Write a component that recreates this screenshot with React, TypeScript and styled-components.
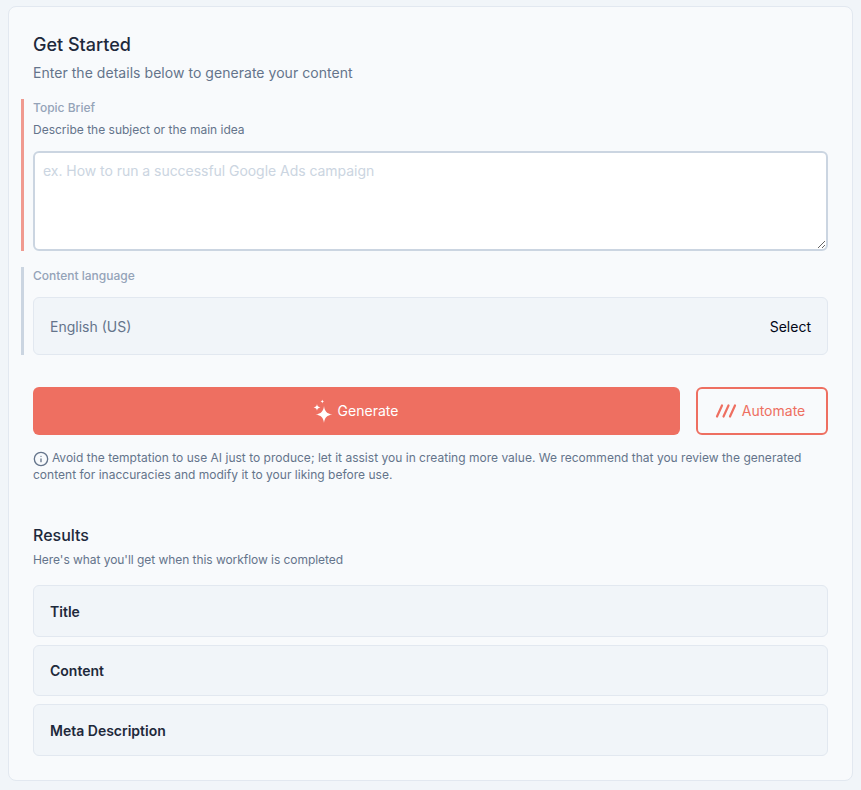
import React from 'react';
import styled, { createGlobalStyle } from 'styled-components';
import { Info } from 'lucide-react';

const GlobalStyle = createGlobalStyle`
  * {
    box-sizing: border-box;
  }
  html, body {
    margin: 0;
    background: #f1f5f9;
    font-family: Inter, "Liberation Sans", sans-serif;
  }
`;

function SparkleIcon() {
  return (
    <svg width="22" height="24" viewBox="0 0 22 24" fill="#fff">
      <path d="M13 7c.7 5.400 2.900 7.700 8.500 8.500-5.600.8-7.800 3-8.500 8.500-.7-5.500-2.900-7.700-8.500-8.500 5.600-.8 7.800-3.100 8.500-8.500z" />
      <path d="M6 5c.3 2.200 1.100 3 3.400 3.400-2.300.4-3.100 1.100-3.400 3.400-.3-2.300-1.100-3-3.400-3.400 2.300-.4 3.100-1.200 3.400-3.400z" />
      <path d="M11.300.5c.2 1.300.6 1.700 1.900 2-1.300.3-1.700.7-1.900 2-.2-1.300-.6-1.700-1.900-2 1.300-.3 1.700-.7 1.900-2z" />
    </svg>
  );
}

function SlashesIcon() {
  return (
    <svg width="22" height="14" viewBox="0 0 22 14" fill="none" stroke="#ee6f61" strokeWidth="2.200" strokeLinecap="round">
      <path d="M2 12.500L7 1.500" />
      <path d="M8.500 12.500L13.500 1.500" />
      <path d="M15 12.500L20 1.500" />
    </svg>
  );
}

export default function App() {
  return (
    <>
      <GlobalStyle />
      <Page>
        <Panel>
          <Title>Get Started</Title>
          <Subtitle>Enter the details below to generate your content</Subtitle>

          <Field $accent="#f09a90">
            <FieldLabel>Topic Brief</FieldLabel>
            <FieldHint>Describe the subject or the main idea</FieldHint>
            <TextArea placeholder="ex. How to run a successful Google Ads campaign" />
          </Field>

          <LanguageField $accent="#cbd5e1">
            <FieldLabel>Content language</FieldLabel>
            <LanguageBox>
              <LanguageName>English (US)</LanguageName>
              <SelectLink>Select</SelectLink>
            </LanguageBox>
          </LanguageField>

          <Actions>
            <GenerateButton>
              <SparkleIcon />
              Generate
            </GenerateButton>
            <AutomateButton>
              <SlashesIcon />
              Automate
            </AutomateButton>
          </Actions>

          <Notice>
            <Info size={16} color="#64748b" strokeWidth={2} /> Avoid the temptation to use AI just to produce; let it assist you in creating more value. We recommend that you review the generated
            content for inaccuracies and modify it to your liking before use.
          </Notice>

          <ResultsTitle>Results</ResultsTitle>
          <ResultsHint>Here's what you'll get when this workflow is completed</ResultsHint>
          <ResultList>
            <ResultRow>Title</ResultRow>
            <ResultRow>Content</ResultRow>
            <ResultRow>Meta Description</ResultRow>
          </ResultList>
        </Panel>
      </Page>
    </>
  );
}

const Page = styled.div`
  width: 861px;
  height: 790px;
  padding: 6px 8px 9px;
`;

const Panel = styled.div`
  width: 845px;
  height: 775px;
  padding: 24px;
  background: #f8fafc;
  border: 1px solid #e2e8f0;
  border-radius: 8px;
`;

const Title = styled.h2`
  margin: 0;
  font-size: 18px;
  line-height: 28px;
  font-weight: 500;
  color: #1e293b;
`;

const Subtitle = styled.p`
  margin: 0 0 16px;
  padding-top: 4px;
  font-size: 14px;
  line-height: 20px;
  letter-spacing: 0.04px;
  color: #64748b;
`;

const Field = styled.div<{ $accent: string }>`
  margin-left: -12px;
  padding-left: 9px;
  border-left: 3px solid ${(props) => props.$accent};
`;

const LanguageField = styled(Field)`
  margin-top: 16px;
`;

const FieldLabel = styled.div`
  padding-top: 1px;
  font-size: 12px;
  line-height: 16px;
  font-weight: 500;
  color: #94a3b8;
`;

const FieldHint = styled.div`
  margin-top: 6px;
  font-size: 12px;
  line-height: 16px;
  color: #64748b;
`;

const TextArea = styled.textarea`
  display: block;
  width: 795px;
  height: 100px;
  margin-top: 13px;
  padding: 8px;
  background: #fff;
  border: 2px solid #cbd5e1;
  border-radius: 6px;
  outline: none;
  font-family: inherit;
  font-size: 14px;
  line-height: 20px;
  color: #1e293b;
  &::placeholder {
    color: #cbd5e1;
    letter-spacing: -0.04px;
  }
`;

const LanguageBox = styled.div`
  display: flex;
  align-items: center;
  justify-content: space-between;
  height: 58px;
  margin-top: 13px;
  padding: 0 16px;
  background: #f1f5f9;
  border: 1px solid #e2e8f0;
  border-radius: 6px;
`;

const LanguageName = styled.span`
  font-size: 14px;
  color: #64748b;
`;

const SelectLink = styled.span`
  font-size: 14px;
  color: #020617;
`;

const Actions = styled.div`
  display: flex;
  gap: 16px;
  margin-top: 32px;
`;

const BaseButton = styled.button`
  display: flex;
  align-items: center;
  justify-content: center;
  height: 48px;
  border-radius: 6px;
  font-family: inherit;
  font-size: 14px;
  cursor: pointer;
  svg {
    margin-top: 2px;
  }
`;

const GenerateButton = styled(BaseButton)`
  flex: 1;
  gap: 5px;
  padding: 0 4px 2px 0;
  background: #ee6f61;
  border: none;
  color: #fff;
`;

const AutomateButton = styled(BaseButton)`
  width: 132px;
  gap: 5px;
  padding: 0 4px 2px 0;
  background: transparent;
  border: 2px solid #ee6f61;
  color: #ee6f61;
`;

const Notice = styled.p`
  margin: 15px 0 0;
  font-size: 12px;
  line-height: 16.500px;
  letter-spacing: 0.015px;
  color: #64748b;
  svg {
    margin: -2px -0.500px -2px 0;
    vertical-align: -3px;
  }
`;

const ResultsTitle = styled.h3`
  margin: 39.500px 0 0;
  font-size: 16px;
  line-height: 24px;
  font-weight: 500;
  color: #1e293b;
`;

const ResultsHint = styled.p`
  margin: 5px 0 0;
  font-size: 12px;
  line-height: 16px;
  letter-spacing: -0.05px;
  color: #64748b;
`;

const ResultList = styled.div`
  display: flex;
  flex-direction: column;
  gap: 8px;
  margin-top: 17.900px;
`;

const ResultRow = styled.div`
  display: flex;
  align-items: center;
  height: 51.500px;
  padding: 0 16px;
  background: #f1f5f9;
  border: 1px solid #e2e8f0;
  border-radius: 6px;
  font-size: 14px;
  font-weight: 600;
  color: #1e293b;
`;
